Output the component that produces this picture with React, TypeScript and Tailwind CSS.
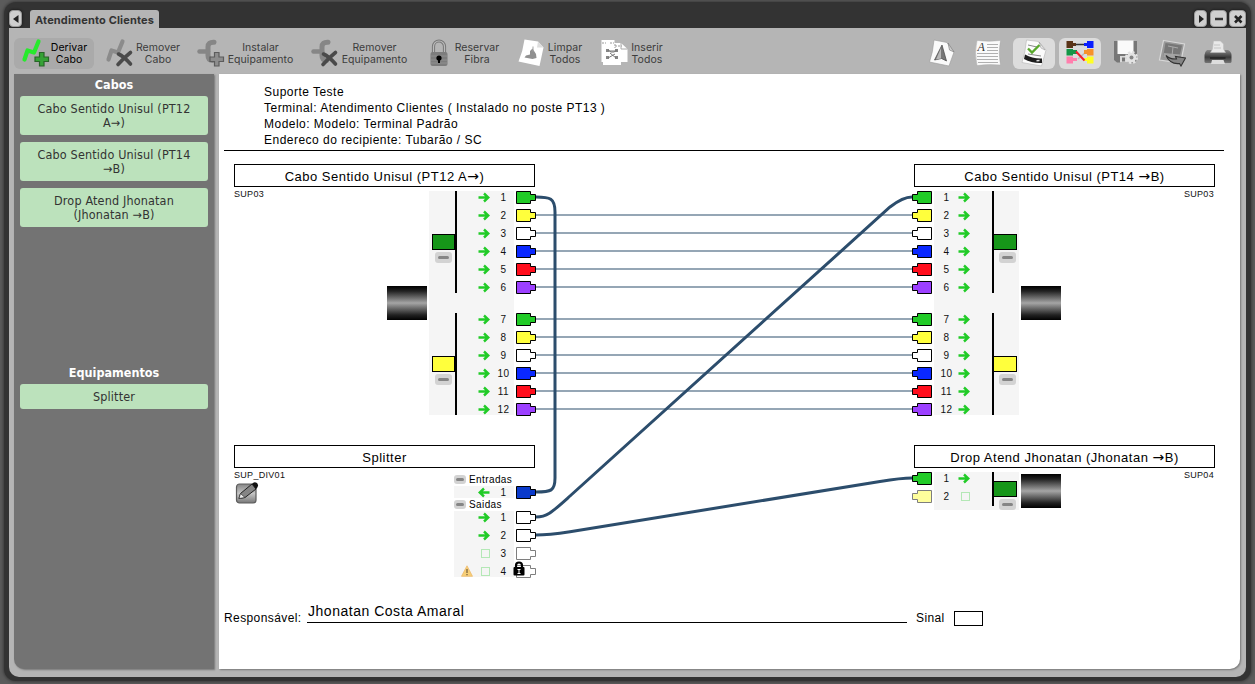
import React from "react";

type Side = "left" | "right";
type Fiber = { n: number; color: string; state?: "on" | "off" | "in"; faded?: boolean; warn?: boolean; locked?: boolean };

const COLORS = ["#21cb27", "#ffff3c", "#ffffff", "#0a28ff", "#ff0d1c", "#9c40ff"];
const group = (start: number): Fiber[] => COLORS.map((color, i) => ({ n: start + i, color }));

/* ---------- toolbar icons ---------- */

const Bolt = ({ color }: { color: string }) => (
  <path d="M2.500 21.500 L5.500 12.500 L12 14.500 L16.500 3.500" fill="none" stroke={color} strokeWidth="4.200" strokeLinecap="round" strokeLinejoin="round" />
);
const Plus = ({ fill, stroke }: { fill: string; stroke: string }) => (
  <path d="M17.500 14.500h4.500v4.500h4.500v4.500h-4.500v4.500h-4.500v-4.500h-4.500v-4.500h4.500z" fill={fill} stroke={stroke} strokeWidth="1.200" />
);
const Cross = () => (
  <path d="M12.500 16 C17 18 21 22 24.500 26 M24.500 14.500 C20 18 16 22 12 26.500" fill="none" stroke="#4a4a4a" strokeWidth="3.600" strokeLinecap="round" />
);
const Device = () => (
  <>
    <path d="M2.500 13.500H11" stroke="#868686" strokeWidth="4.500" strokeLinecap="round" />
    <path d="M17 4.300Q11 4 11 9V17.500Q11 22 15.500 22.500" fill="none" stroke="#868686" strokeWidth="5" strokeLinecap="round" />
  </>
);

function ToolIcon({ name }: { name: string }) {
  return (
    <svg className="mb-px h-[30px] w-7 shrink-0 overflow-visible" viewBox="0 0 28 30">
      {name === "addCable" && (<><Bolt color="#27ea2d" /><Plus fill="#36a236" stroke="#286528" /></>)}
      {name === "removeCable" && (<><Bolt color="#8b8b8b" /><Cross /></>)}
      {name === "addDevice" && (<><Device /><Plus fill="#8d8d8d" stroke="#5c5c5c" /></>)}
      {name === "removeDevice" && (<><Device /><Cross /></>)}
      {name === "lock" && (
        <>
          <path d="M8.500 16V8.500a5.500 5.500 0 0 1 11 0V16" fill="none" stroke="#777" strokeWidth="3.200" />
          <path d="M8.500 16V8.500a5.500 5.500 0 0 1 11 0V16" fill="none" stroke="#bbb" strokeWidth="1.200" />
          <rect x="5.500" y="14" width="17" height="14" rx="2" fill="#7d7d7d" />
          <path d="M6 18H22M6 22H22M6 25H22" stroke="#919191" />
          <circle cx="14" cy="20" r="2.600" fill="#000" />
          <path d="M13 20h2v5h-2z" fill="#000" />
        </>
      )}
      {name === "clean" && (
        <>
          <path d="M6.500 1.500 L20 3.500 L25.500 9.500 L21.500 28 L0.500 23.500 Q5 13 6.500 1.500z" fill="#fff" />
          <path d="M20 3.500 19 9.500 25.500 9.500z" fill="#dedede" />
          <path d="M12 13L14.500 10.500L18 16L18.500 20L14.500 21L6.500 19.500L8 17.500L12 16.500z" fill="#909090" />
          <path d="M15 8.500v5" stroke="#a5a5a5" />
        </>
      )}
      {name === "insert" && (
        <>
          <path d="M0.500 2H13.500V24H0.500z M9 5H20L26.500 11V24H9z" fill="#fff" />
          <path d="M2 7H20V27H2z" fill="#fff" />
          <path d="M1 5h4M9 5h4M14 6v4M14 8h7" stroke="#999" strokeDasharray="2 1" />
          <path d="M20 5V11H26.500" fill="none" stroke="#aaa" />
          <path d="M5 11h3v3h-3zM14 11h3v3h-3zM5 18h3v3h-3zM14 18h3v3h-3z" fill="#858585" />
          <path d="M7 12l3 2h3l3-2M7 20l7-4M9 15l6 5M8 13h6" fill="none" stroke="#777" />
        </>
      )}
    </svg>
  );
}

function ViewIcon({ name }: { name: string }) {
  return (
    <svg className="mb-px h-[28px] w-[28px]" viewBox="0 0 28 28">
      {name === "north" && (
        <>
          <path d="M6 1 L19 3.500 L26 13 L21 27 L1.500 23 Q5 13 6 1z" fill="#fafafa" stroke="#999" strokeWidth=".6" />
          <path d="M20 4l1.500 7 4.500 2z" fill="#ccc" stroke="#777" strokeWidth=".6" />
          <path d="M14 6 L18.500 22 L13.500 19.500 L6.500 21z" fill="#777" stroke="#444" strokeWidth=".7" />
          <path d="M13 9l0 10.500-5 1z" fill="#b8b8b8" />
        </>
      )}
      {name === "text" && (
        <>
          <path d="M3 1.500 Q15 3 26.500 1.500 Q24 14 26.500 26 Q14 25 3 26.500 Q0 13 3 1.500z" fill="#fafafa" stroke="#aaa" strokeWidth=".5" />
          <text x="3.500" y="12" fontSize="12" fontStyle="italic" fontFamily="Liberation Serif, serif" fill="#333">A</text>
          <path d="M13 5.500h11M13 8.500h11M13 11.500h11M3 14.500h21M3 17.500h21M3 20.500h21M4 23.500h20" stroke="#b0b0b0" />
        </>
      )}
      {name === "check" && (
        <>
          <path d="M6.500 1 L18.500 2.500 L26 11 L21.500 27 L2 23.500 Q5.500 13 6.500 1z" fill="#fbfbfb" stroke="#aaa" strokeWidth=".5" />
          <path d="M8 6l9 2M8 15l13 2" stroke="#888" />
          <path d="M19 3l2 6 4 2z" fill="#eee" stroke="#888" strokeWidth=".5" />
          <path d="M5 15.500Q13 20 22 19.500V24Q12 24.500 4 20z" fill="#1d1d1d" />
          <path d="M16.500 21l3-.2v1.500l-3 .2z" fill="#ddd" />
          <path d="M8 9.500l4 4L19.500 6" fill="none" stroke="#58a82b" strokeWidth="2.400" />
        </>
      )}
      {name === "colors" && (
        <>
          <path d="M7 5.500H21" stroke="#333" strokeWidth="1.500" />
          <path d="M12 20L21 12" stroke="#bbb" strokeWidth="1.500" />
          <path d="M.5 2H7V4H10V7H7V9H.5z" fill="#5a3418" />
          <path d="M.5 10H7V11H11V15H7V16.500H.5z" fill="#149647" />
          <path d="M.5 17.500H7V19H11V22H7V24.500H.5z" fill="#ff7fad" />
          <path d="M27.500 2H21V4H18V7H21V9H27.500z" fill="#0a1eff" />
          <path d="M27.500 10H21V11H18V15H21V16.500H27.500z" fill="#f7922b" />
          <path d="M27.500 17.500H21V19H18V22H21V24.500H27.500z" fill="#ffff25" />
          <path d="M10 12.500L18.500 21.500" stroke="#f51c2d" strokeWidth="2" />
        </>
      )}
      {name === "save" && (
        <>
          <path d="M2 2H25V20L23 23.500H5L2 21z" fill="#777" />
          <path d="M5.500 1.500H21.500V15H5.500z" fill="#fafafa" />
          <path d="M8 17H19V23.500H8z" fill="#d9d9d9" />
          <path d="M10 18.500h3v4h-3z" fill="#777" />
          <circle cx="19.500" cy="18.500" r="5" fill="none" stroke="#e3e3e3" strokeWidth="3" strokeDasharray="2.200 1.727" />
          <circle cx="19.500" cy="18.500" r="4.800" fill="#e3e3e3" />
          <circle cx="19.500" cy="18.500" r="2" fill="#858585" />
        </>
      )}
      {name === "export" && (
        <>
          <path d="M5.500 1.500 L26.500 5 L22.500 24 L1.500 21z" fill="#999" stroke="#d8d8d8" strokeWidth="1.200" />
          <path d="M7.500 4 L24 6.500 L21 20 L5 18.500z" fill="#777" />
          <path d="M6 14L22 15.500L21 20L5 18.500z" fill="#a3a3a3" />
          <path d="M10 7l10 2M15 8l-1 9" stroke="#aaa" />
          <path d="M8 16.500Q12 20.500 18.500 20L17.500 17.500 27.500 19 23 27 21.500 24.500Q12 25.500 8 16.500z" fill="#858585" stroke="#333" strokeWidth="1.100" />
        </>
      )}
      {name === "print" && (
        <>
          <defs>
            <linearGradient id="printer" x1="0" y1="0" x2="0" y2="1"><stop offset="0" stopColor="#888" /><stop offset=".55" stopColor="#3a3a3a" /><stop offset="1" stopColor="#777" /></linearGradient>
          </defs>
          <path d="M3 11H24Q27.500 13 27.500 16V22.500Q27.500 24 26 24H2Q.5 24 .5 22.500V16Q.5 13 3 11z" fill="url(#printer)" />
          <path d="M9.500 2H16.500L19.500 5V10L21.500 13.500H6.500L8.500 10z" fill="#e9e9e9" stroke="#bbb" strokeWidth=".5" />
          <path d="M10 6h6M10 9h7" stroke="#c3c3c3" />
          <path d="M6 19H21.500" stroke="#222" strokeWidth="1.500" />
          <path d="M8 21H19.500L21 25H7z" fill="#ddd" />
        </>
      )}
    </svg>
  );
}

const TOOLS = [
  { icon: "addCable", a: "Derivar", b: "Cabo", w: "w-[84px]", t: "w-[38px]" },
  { icon: "removeCable", a: "Remover", b: "Cabo", w: "w-[91px]", t: "w-[48px]" },
  { icon: "addDevice", a: "Instalar", b: "Equipamento", w: "w-[114px]", t: "w-[71px]" },
  { icon: "removeDevice", a: "Remover", b: "Equipamento", w: "w-[114px]", t: "w-[71px]" },
  { icon: "lock", a: "Reservar", b: "Fibra", w: "w-[93px]", t: "w-12" },
  { icon: "clean", a: "Limpar", b: "Todos", w: "w-[83px]", t: "w-[38px]" },
  { icon: "insert", a: "Inserir", b: "Todos", w: "w-20", t: "w-9" },
];

function Toolbar() {
  return (
    <div className="flex h-[46px] shrink-0 items-start justify-between pl-[5px] pr-[7px] pt-[10px]">
      <div className="flex">
        {TOOLS.map((t, i) => (
          <div key={i} className={`shrink-0 ${t.w}`}>
            <button className={`flex h-[31px] items-center pl-2 ${i === 0 ? "w-20 rounded-md bg-[#aaaaaa] text-black" : "text-[#3c3c3c]"}`}>
              <ToolIcon name={t.icon} />
              <span className={`flex shrink-0 flex-col items-center whitespace-nowrap pt-px font-[family-name:Inter,sans-serif] text-[10.5px] leading-[12px] tracking-[0.05px] ${t.t}`}>
                <span>{t.a}</span>
                <span>{t.b}</span>
              </span>
            </button>
          </div>
        ))}
      </div>
      <div className="flex gap-1">
        {["north", "text", "check", "colors", "save", "export", "print"].map((n) => (
          <button key={n} className={`flex h-[31px] w-[42px] items-center justify-center rounded-md ${n === "check" || n === "colors" ? "bg-[#dcdcdc]" : ""}`}>
            <ViewIcon name={n} />
          </button>
        ))}
      </div>
    </div>
  );
}

/* ---------- sidebar ---------- */

function SideItem({ lines }: { lines: string[] }) {
  return (
    <div className="flex flex-col items-center justify-center whitespace-nowrap rounded-[3px] bg-[#bce2bc] py-[5.5px] text-[12.5px] leading-[14px] tracking-[0.15px] text-[#333]">
      {lines.map((l) => (<span key={l}>{l}</span>))}
    </div>
  );
}

function Sidebar() {
  const heading = "text-center text-[12.5px] font-bold leading-[22px] text-white";
  return (
    <aside className="flex w-[200px] shrink-0 flex-col rounded-bl-[10px] bg-[#737373] px-1.5 font-[family-name:'DejaVu_Sans_Condensed','DejaVu_Sans',sans-serif] shadow-[1px_1px_2px_rgba(0,0,0,0.35)]">
      <section className="h-[288px]">
        <h2 className={heading}>Cabos</h2>
        <div className="flex flex-col gap-[7px]">
          <SideItem lines={["Cabo Sentido Unisul (PT12", "A→)"]} />
          <SideItem lines={["Cabo Sentido Unisul (PT14", "→B)"]} />
          <SideItem lines={["Drop Atend Jhonatan", "(Jhonatan →B)"]} />
        </div>
      </section>
      <section>
        <h2 className={heading}>Equipamentos</h2>
        <SideItem lines={["Splitter"]} />
      </section>
    </aside>
  );
}

/* ---------- diagram parts ---------- */

function Connector({ color, side, faded }: { color: string; side: Side; faded?: boolean }) {
  return (
    <svg className={`h-[13px] w-5 shrink-0 ${side === "right" ? "-scale-x-100" : ""} ${faded ? "opacity-50" : ""}`} viewBox="0 0 20 13">
      <path d="M.5 .5H14.500V3.500H19.500V9.500H14.500V12.500H.5z" fill={color} stroke="#000" />
    </svg>
  );
}

function Arrow({ back }: { back?: boolean }) {
  return (
    <svg className={`h-[11px] w-3 shrink-0 ${back ? "-scale-x-100" : ""}`} viewBox="0 0 12 11">
      <path d="M.5 5.500H10.500M6 1.500L10.300 5.500L6 9.500" fill="none" stroke="#21cb27" strokeWidth="2.400" />
    </svg>
  );
}

function Minus({ small }: { small?: boolean }) {
  return (
    <span className={`flex items-center justify-center rounded-[3px] bg-[#d3d3d3] ${small ? "h-[9px] w-3" : "h-[11px] w-[17px]"}`}>
      <span className={`rounded-sm bg-[#858585] ${small ? "h-[3px] w-2" : "h-[3px] w-[11px]"}`} />
    </span>
  );
}

function FiberRow({ f, side }: { f: Fiber; side: Side }) {
  const rev = side === "right" ? "flex-row-reverse" : "";
  return (
    <div className={`flex h-3 items-center ${rev}`}>
      {f.warn && (
        <svg className="mr-[5px] h-3 w-3 shrink-0" viewBox="0 0 12 12">
          <path d="M6 .8L11.500 11.300H.5z" fill="#f7cf76" stroke="#eebb70" strokeWidth=".8" />
          <path d="M6 4v4M6 9v1.200" stroke="#7c6540" strokeWidth="1.300" />
        </svg>
      )}
      <span className="flex w-3 shrink-0 justify-center">
        {f.state === "off" ? <span className="ml-[2px] h-[9px] w-[9px] border border-[#b4e8b6]" /> : <Arrow back={f.state === "in"} />}
      </span>
      <span className={`w-6 shrink-0 text-center text-[10px] leading-[13px] tracking-[0.5px] text-[#111] ${side === "left" ? "pl-[3px]" : "pl-px"}`}>{f.n}</span>
      <span className={`relative flex shrink-0 self-start ${side === "left" ? "ml-[2px]" : "mr-[2px]"}`}>
        <Connector color={f.color} side={side} faded={f.faded} />
        {f.locked && (
          <svg className="absolute -left-[3px] -top-[4px] h-[15px] w-3" viewBox="0 0 12 15">
            <path d="M3 8V4.500a3 3 0 0 1 6 0V8" fill="none" stroke="#000" strokeWidth="2.200" />
            <rect x=".5" y="6" width="11" height="8.500" rx="1" fill="#000" />
            <path d="M4.500 8.500h3M6 8.500v4M4.500 12.500h3" stroke="#fff" strokeWidth="1" />
          </svg>
        )}
      </span>
    </div>
  );
}

function Tube({ fibers, color, side, short }: { fibers: Fiber[]; color: string; side: Side; short?: boolean }) {
  const rev = side === "right" ? "flex-row-reverse" : "";
  return (
    <div className={`flex justify-between ${rev}`}>
      <div className={`flex ${short ? "h-[34px]" : "h-[102px]"} ${rev}`}>
        <div className={`flex flex-col ${side === "left" ? "w-[26px] items-end" : "w-[25px] items-start"} ${short ? "pt-[9px]" : "pt-[43px]"}`}>
          <span className={`h-4 w-[23px] shrink-0 border border-black ${side === "left" ? "" : "border-l-0"}`} style={{ background: color }} />
          <span className={`mt-[2px] ${side === "left" ? "mr-[3px]" : "ml-[5px]"}`}><Minus /></span>
        </div>
        <div className="w-[2px] bg-black" />
      </div>
      <div className={`flex flex-col gap-1.5 ${side === "left" ? "-mr-[22px]" : "-ml-[22px]"}`}>
        {fibers.map((f) => (<FiberRow key={f.n} f={f} side={side} />))}
      </div>
    </div>
  );
}

function Jacket({ place }: { place: string }) {
  return <div className={`h-[34px] w-10 shrink-0 bg-[linear-gradient(#000,#222_15%,#a5a5a5_50%,#222_85%,#000)] ${place}`} />;
}

function Title({ text, code, side }: { text: string; code: string; side: Side }) {
  const parts = text.split("→");
  return (
    <div className="flex w-[301px] flex-col">
      <div className="h-[23px] whitespace-pre border border-black bg-white text-center text-[13px] leading-[23px] tracking-[0.5px]">
        {parts[0]}
        {parts.length > 1 && <span className="font-[family-name:'DejaVu_Sans',sans-serif] text-[14px] leading-none">→</span>}
        {parts[1]}
      </div>
      <div className={`text-[9px] leading-[14px] tracking-[0.3px] text-[#111] ${side === "right" ? "pr-px text-right" : ""}`}>{code}</div>
    </div>
  );
}

function Cable({ side }: { side: Side }) {
  return (
    <div className={`flex ${side === "right" ? "flex-row-reverse" : ""}`}>
      <Jacket place="mt-[95px]" />
      <div className={`flex w-[85px] flex-col gap-5 bg-[#f5f5f5] ${side === "left" ? "ml-[2px]" : "mr-[2px]"}`}>
        <Tube fibers={group(1)} color="#169619" side={side} />
        <Tube fibers={group(7)} color="#ffff3c" side={side} />
      </div>
    </div>
  );
}

function Splitter() {
  const out: Fiber[] = [
    { n: 1, color: "#fff" },
    { n: 2, color: "#fff" },
    { n: 3, color: "#fff", state: "off", faded: true },
    { n: 4, color: "#fff", state: "off", faded: true, warn: true, locked: true },
  ];
  const head = "flex h-[13px] items-center gap-[3px] text-[10px] leading-[13px] tracking-[0.4px]";
  return (
    <div className="w-[60px]">
      <div className={head}><Minus small />Entradas</div>
      <div className="flex flex-col items-end bg-[#f5f5f5]">
        <div className="-mr-[22px]"><FiberRow f={{ n: 1, color: "#0a3acb", state: "in" }} side="left" /></div>
      </div>
      <div className={head}><Minus small />Saidas</div>
      <div className="bg-[#f5f5f5]">
        <div className="-mr-[22px] flex flex-col items-end gap-1.5">
          {out.map((f) => (<FiberRow key={f.n} f={f} side="left" />))}
        </div>
      </div>
    </div>
  );
}

function EditIcon() {
  return (
    <svg className="-mt-px ml-px h-[23px] w-[24px]" viewBox="0 0 24 23">
      <defs><linearGradient id="edit" x1="0" y1="0" x2="0" y2="1"><stop offset="0" stopColor="#858585" /><stop offset=".5" stopColor="#c5c5c5" /><stop offset="1" stopColor="#777" /></linearGradient></defs>
      <rect x="1.500" y="3" width="19.500" height="19" rx="3" fill="url(#edit)" stroke="#5c5c5c" strokeWidth="1.200" />
      <path d="M5.500 12.500L17 3L21 8L10 16.500L4 17.500z" fill="#858585" stroke="#222" />
      <path d="M5.500 12.500L10 16.500L4 17.500z" fill="#eee" stroke="#333" strokeWidth=".7" />
      <path d="M17 3Q19 0 22 2Q24.500 5 21 8z" fill="#111" />
    </svg>
  );
}

function Wires() {
  return (
    <svg className="pointer-events-none absolute inset-0 h-[449px] w-[1021px]" viewBox="219 151 1021 449" fill="none">
      {[215, 233, 251, 269, 287, 319, 337, 355, 373, 391, 409].map((y) => (
        <path key={y} d={`M536 ${y}H912`} stroke="#95a6b5" strokeWidth="2" />
      ))}
      <g stroke="#2c4d6c" strokeWidth="3">
        <path d="M536 197C550 197 555 198 555 212V478C555 491 551 492 536 492" />
        <path d="M536 517C547 517 551 513 570 496L890 207C899 200 905 197 912 197" />
        <path d="M536 535C548 535 555 534 570 531.700L880 481.500C895 479 903 478 912 478" />
      </g>
    </svg>
  );
}

function Diagram() {
  return (
    <div className="relative h-[449px]">
      <Wires />
      <div className="absolute left-[15px] top-[13px]"><Title text="Cabo Sentido Unisul (PT12 A→)" code="SUP03" side="left" /></div>
      <div className="absolute left-[168px] top-10"><Cable side="left" /></div>
      <div className="absolute left-[695px] top-[13px]"><Title text="Cabo Sentido Unisul (PT14 →B)" code="SUP03" side="right" /></div>
      <div className="absolute left-[715px] top-10"><Cable side="right" /></div>
      <div className="absolute left-[15px] top-[294px]">
        <Title text="Splitter" code="SUP_DIV01" side="left" />
        <EditIcon />
      </div>
      <div className="absolute left-[235px] top-[322px]"><Splitter /></div>
      <div className="absolute left-[695px] top-[294px]"><Title text="Drop Atend Jhonatan (Jhonatan →B)" code="SUP04" side="right" /></div>
      <div className="absolute left-[715px] top-[321px] flex">
        <div className="mr-[2px] h-[38px] w-[85px] bg-[#f5f5f5]">
          <Tube short side="right" color="#169619" fibers={[{ n: 1, color: "#21cb27" }, { n: 2, color: "#ffff3c", state: "off", faded: true }]} />
        </div>
        <Jacket place="mt-[2px]" />
      </div>
    </div>
  );
}

/* ---------- window ---------- */

function WinButton({ w, children }: { w: string; children: React.ReactNode }) {
  return (
    <button className={`flex h-[17px] items-center justify-center rounded-[4px] border border-[#9a9a9a] bg-[#cfcfcf] shadow-[0_0_2px_1px_#222] ${w}`}>
      <svg className="h-[10px] w-[10px] shrink-0" viewBox="0 0 10 10">{children}</svg>
    </button>
  );
}

export default function App() {
  return (
    <div className="flex h-[684px] w-[1255px] overflow-hidden bg-[#5b5b5b] px-1 pb-[3px] pt-[2px] font-[family-name:'Liberation_Sans',Arial,sans-serif] text-black">
      <div className="flex w-[1247px] flex-col rounded-[12px] bg-[#333] px-[5px] pb-1 shadow-[0_0_3px_1px_rgba(0,0,0,0.35)]">
        <header className="flex h-[26px] shrink-0 items-start pt-2">
          <WinButton w="w-[13px]"><path d="M7.500 1V9L2 5z" fill="#222" /></WinButton>
          <div className="ml-2 h-[18px] w-[129px] whitespace-nowrap rounded-t-[3px] bg-[#b5b5b5] text-center font-[family-name:Inter,sans-serif] text-[11px] font-bold leading-[20px] tracking-[0.15px] text-[#333]">Atendimento Clientes</div>
          <div className="ml-auto flex gap-[2px]">
            <span className="mr-px"><WinButton w="w-[13px]"><path d="M3 1V9L8 5z" fill="#222" /></WinButton></span>
            <WinButton w="w-[17px]"><path d="M1 5H9" stroke="#333" strokeWidth="2.500" /></WinButton>
            <WinButton w="w-[17px]"><path d="M2 2L8.500 8.500M8.500 2L2 8.500" stroke="#222" strokeWidth="2.600" /></WinButton>
          </div>
        </header>
        <div className="flex h-[649px] flex-col rounded-b-[10px] bg-[#b5b5b5]">
          <Toolbar />
          <div className="flex h-[595px] gap-[5px] pl-[5px]">
            <Sidebar />
            <main className="w-[1021px] rounded-br-[10px] bg-white shadow-[1px_1px_2px_rgba(0,0,0,0.35)]">
              <div className="ml-[5px] h-[77px] w-[1000px] whitespace-nowrap border-b border-black pl-10 pt-[10px] text-[12px] leading-[16px] tracking-[0.48px]">
                <p>Suporte Teste</p>
                <p>Terminal: Atendimento Clientes ( Instalado no poste PT13 )</p>
                <p>Modelo: Modelo: Terminal Padrão</p>
                <p>Endereco do recipiente: Tubarão / SC</p>
              </div>
              <Diagram />
              <footer className="flex h-[26px] items-end whitespace-nowrap pl-[5px] text-[12px] leading-[16px] tracking-[0.4px]">
                <span className="w-[83px]">Responsável:</span>
                <span className="mb-[3px] h-[23px] w-[600px] border-b border-black pl-px pt-[3px] text-[14px] leading-[16px] tracking-[0.52px]">Jhonatan Costa Amaral</span>
                <span className="ml-[9px] w-[38px]">Sinal</span>
                <span className="h-[15px] w-[29px] border border-black" />
              </footer>
            </main>
          </div>
        </div>
      </div>
    </div>
  );
}
